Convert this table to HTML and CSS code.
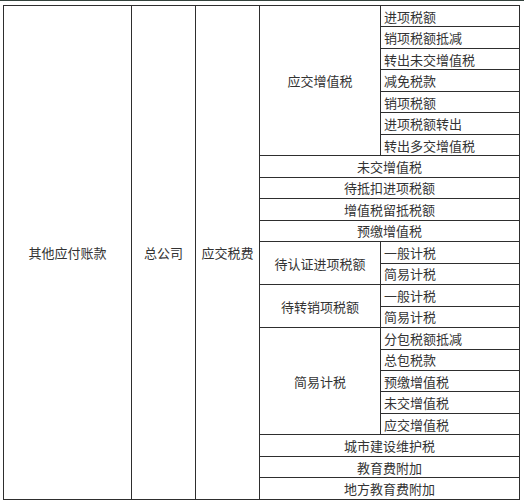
FILE: index.html
```html
<!DOCTYPE html>
<html lang="zh">
<head>
<meta charset="utf-8">
<link rel="stylesheet" href="styles.css">
</head>
<body>
<div class="topline"></div>
<table class="ledger">
  <colgroup>
    <col class="c1"><col class="c2"><col class="c3"><col class="c4"><col class="c5">
  </colgroup>
  <tbody>
    <tr><td rowspan="23" class="ctr">其他应付账款</td><td rowspan="23" class="ctr">总公司</td><td rowspan="23" class="ctr">应交税费</td><td rowspan="7" class="ctr">应交增值税</td><td class="lft">进项税额</td></tr>
    <tr><td class="lft">销项税额抵减</td></tr>
    <tr><td class="lft">转出未交增值税</td></tr>
    <tr><td class="lft">减免税款</td></tr>
    <tr><td class="lft">销项税额</td></tr>
    <tr><td class="lft">进项税额转出</td></tr>
    <tr><td class="lft">转出多交增值税</td></tr>
    <tr><td colspan="2" class="ctr">未交增值税</td></tr>
    <tr><td colspan="2" class="ctr">待抵扣进项税额</td></tr>
    <tr><td colspan="2" class="ctr">增值税留抵税额</td></tr>
    <tr><td colspan="2" class="ctr">预缴增值税</td></tr>
    <tr><td rowspan="2" class="ctr">待认证进项税额</td><td class="lft">一般计税</td></tr>
    <tr><td class="lft">简易计税</td></tr>
    <tr><td rowspan="2" class="ctr">待转销项税额</td><td class="lft">一般计税</td></tr>
    <tr><td class="lft">简易计税</td></tr>
    <tr><td rowspan="5" class="ctr">简易计税</td><td class="lft">分包税额抵减</td></tr>
    <tr><td class="lft">总包税款</td></tr>
    <tr><td class="lft">预缴增值税</td></tr>
    <tr><td class="lft">未交增值税</td></tr>
    <tr><td class="lft">应交增值税</td></tr>
    <tr><td colspan="2" class="ctr">城市建设维护税</td></tr>
    <tr><td colspan="2" class="ctr">教育费附加</td></tr>
    <tr><td colspan="2" class="ctr">地方教育费附加</td></tr>
  </tbody>
</table>
</body>
</html>
```

FILE: styles.css
```css
html, body {
  margin: 0;
  padding: 0;
  background: #ffffff;
}
body {
  width: 524px;
  height: 501px;
  overflow: hidden;
  font-family: "Noto Sans CJK SC", "Noto Sans", sans-serif;
  font-size: 13px;
  color: #333333;
}
.topline {
  height: 1px;
  background: #34423c;
}
.ledger {
  margin: 4px 0 0 3px;
  width: 516px;
  table-layout: fixed;
  border-collapse: collapse;
  border-left: 1px solid #777777;
}
.c1 { width: 128px; }
.c2 { width: 64px; }
.c3 { width: 64px; }
.c4 { width: 121px; }
.c5 { width: 139px; }
.ledger tr {
  height: 21.48px;
}
.ledger td {
  border: 1px solid #2e2e2e;
  padding: 0;
  line-height: 1;
  white-space: nowrap;
  overflow: hidden;
}
.ledger td.ctr {
  text-align: center;
}
.ledger td.lft {
  text-align: left;
  padding-left: 3px;
}
```
